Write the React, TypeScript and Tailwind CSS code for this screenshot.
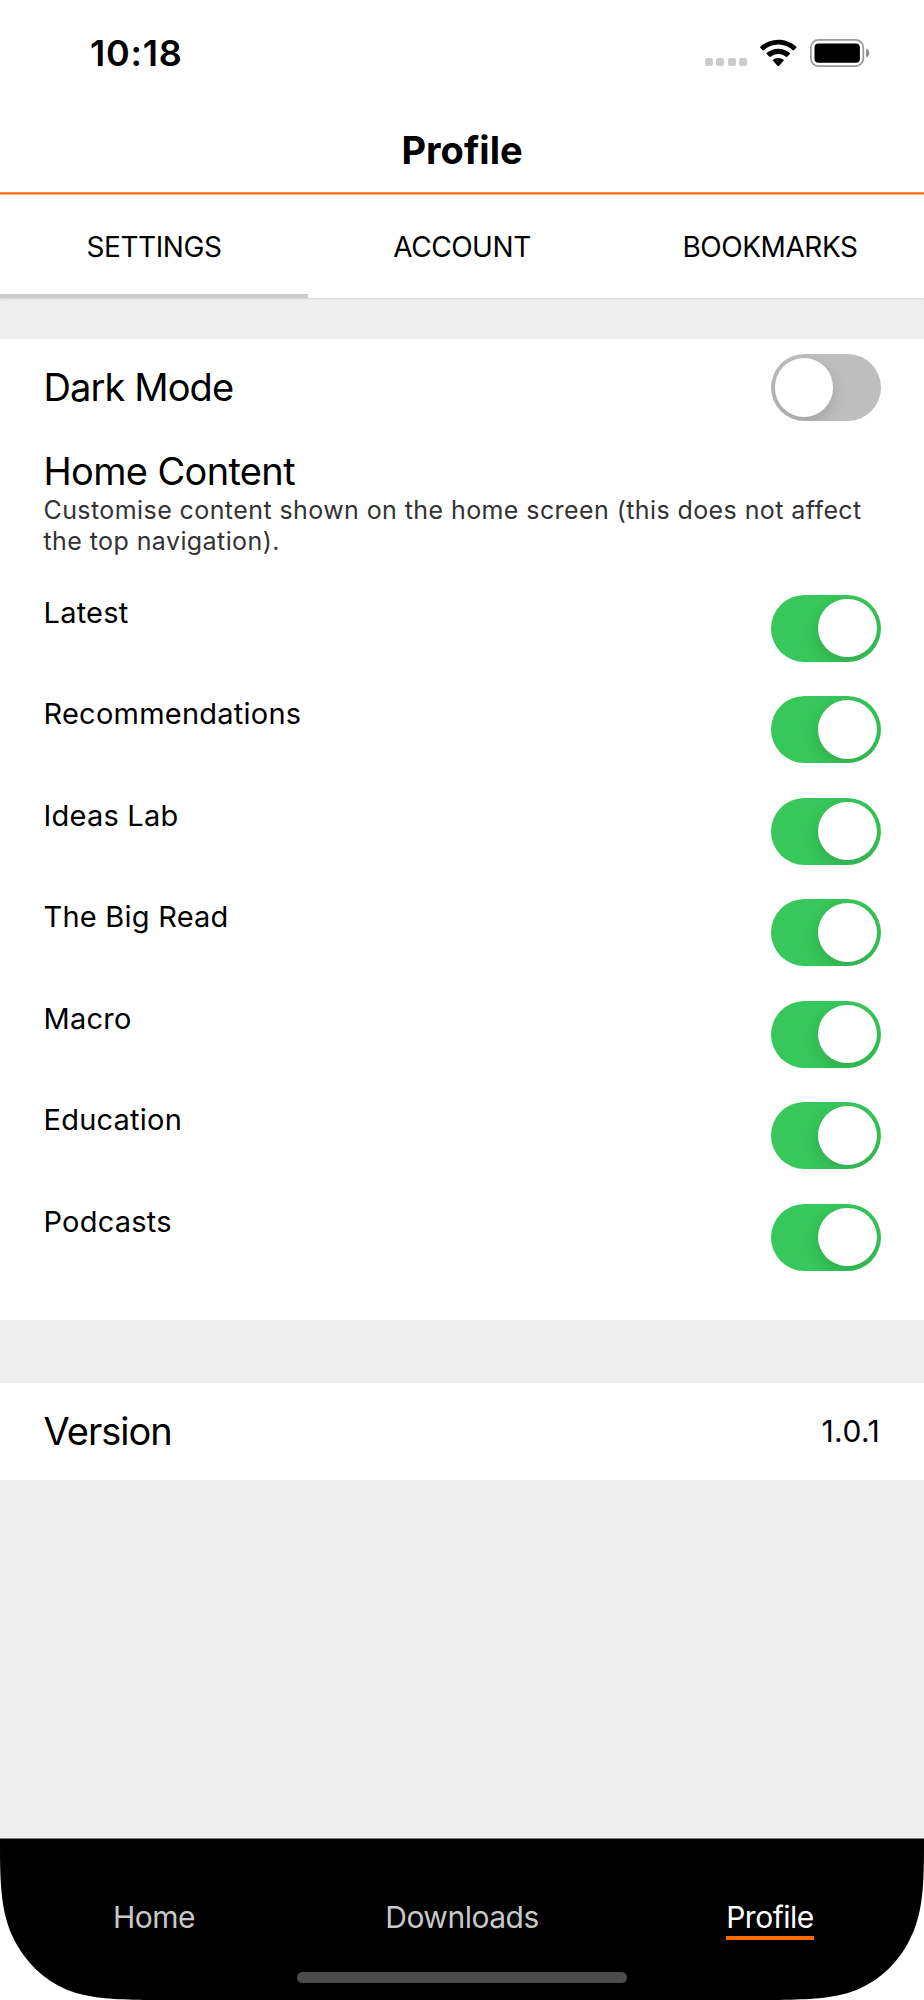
import clsx from "clsx";

interface ToggleProps {
  on: boolean;
}

const tabs = ["SETTINGS", "ACCOUNT", "BOOKMARKS"];

const homeContent = [
  "Latest",
  "Recommendations",
  "Ideas Lab",
  "The Big Read",
  "Macro",
  "Education",
  "Podcasts",
];

const Toggle = ({ on }: ToggleProps) => (
  <button
    role="switch"
    aria-checked={on}
    className={clsx(
      "flex h-[67px] w-[110.2px] shrink-0 items-center overflow-hidden rounded-full px-1",
      on ? "justify-end bg-[#37c75a]" : "justify-start bg-[#bebebe]",
    )}
  >
    <span className="size-[58.6px] rounded-full bg-white shadow-[0_6px_16px_rgba(0,0,0,0.14)]" />
  </button>
);

const SignalDots = () => (
  <div className="mt-[19px] flex gap-[3.4px]">
    <span className="size-2 rounded-[2.5px] bg-[#cbcbcb]" />
    <span className="size-2 rounded-[2.5px] bg-[#cbcbcb]" />
    <span className="size-2 rounded-[2.5px] bg-[#cbcbcb]" />
    <span className="size-2 rounded-[2.5px] bg-[#cbcbcb]" />
  </div>
);

const WifiIcon = () => (
  <svg width="37" height="28" viewBox="0 0 37 28" className="ml-[13px]">
    <path d="M18.3 .7C25.3 .7 31.6 3.4 36.3 7.7Q36.8 8.2 36.3 8.8L33.9 11.2Q33.4 11.7 32.8 11.2C28.9 7.7 23.9 5.6 18.3 5.6C12.7 5.6 7.7 7.7 3.8 11.2Q3.2 11.7 2.7 11.2L.3 8.8Q-.2 8.2 .3 7.7C5 3.4 11.3 .7 18.3 .7Z" />
    <path d="M18.3 9.7C22.8 9.7 26.8 11.3 29.9 14Q30.4 14.5 29.9 15.1L27.2 17.8Q26.7 18.3 26.1 17.8C24 16 21.3 14.9 18.3 14.9C15.3 14.9 12.6 16 10.5 17.8Q9.9 18.3 9.4 17.8L6.7 15.1Q6.2 14.5 6.7 14C9.8 11.3 13.8 9.7 18.3 9.7Z" />
    <path d="M18.3 18.9C20.3 18.9 22.1 19.6 23.5 20.7Q24.1 21.2 23.6 21.8L18.9 26.9Q18.3 27.5 17.7 26.9L13 21.8Q12.5 21.2 13.1 20.7C14.5 19.6 16.3 18.9 18.3 18.9Z" />
  </svg>
);

const BatteryIcon = () => (
  <svg width="60" height="28" viewBox="0 0 60 28" className="ml-[13px]">
    <rect x=".9" y=".9" width="52.4" height="26.2" rx="7.6" fill="none" stroke="#999" strokeWidth="1.7" />
    <rect x="4.5" y="4.4" width="45.4" height="19.4" rx="4" />
    <path d="M56.2 9.6C58 10.3 59.2 12 59.2 14S58 17.7 56.2 18.4Z" fill="#888" />
  </svg>
);

const StatusBar = () => (
  <div className="flex h-[105px] items-center justify-between pr-[54px] pl-[90px]">
    <p className="text-[36px] leading-none font-semibold tracking-[0.8px]">10:18</p>
    <div className="flex items-center">
      <SignalDots />
      <WifiIcon />
      <BatteryIcon />
    </div>
  </div>
);

const Header = () => (
  <header>
    <div className="flex h-[87px] items-center justify-center pt-[3px]">
      <h1 className="text-[38px] leading-none font-bold">Profile</h1>
    </div>
    <div className="h-px bg-[#ff8a33]" />
    <div className="h-px bg-[#ee6616]" />
    <div className="h-px bg-[#ffc08e]" />
    <nav className="grid h-[103px] grid-cols-3 text-[28px] tracking-[-0.45px]">
      {tabs.map((tab, i) => (
        <button
          key={tab}
          className={clsx("border-b-4 pt-1", i === 0 ? "border-[#cbcbcb]" : "border-transparent")}
        >
          {tab}
        </button>
      ))}
    </nav>
  </header>
);

const TabBar = () => (
  <footer className="relative h-[162px] border-t border-[#777] bg-black">
    <nav className="grid grid-cols-3 pt-[60px] text-center text-[30px] leading-[37px] tracking-[-0.5px] text-[#c8c8c8]">
      <a>Home</a>
      <a>Downloads</a>
      <a className="mx-auto border-b-4 border-[#ff6d00] text-white">Profile</a>
    </nav>
    <div className="mx-auto mt-[32px] h-[11px] w-[330px] rounded-full bg-[#4c4c4c]" />
    {/* rounded screen corners */}
    <svg width="150" height="162" viewBox="0 0 150 162" className="absolute bottom-0 left-0 fill-white">
      <path d="M0 10C0 58 3 82 17 107C31 131 51 147 76 155C98 161 118 161.5 150 162H0Z" />
    </svg>
    <svg width="150" height="162" viewBox="0 0 150 162" className="absolute right-0 bottom-0 -scale-x-100 fill-white">
      <path d="M0 10C0 58 3 82 17 107C31 131 51 147 76 155C98 161 118 161.5 150 162H0Z" />
    </svg>
  </footer>
);

export default function App() {
  return (
    <div className="flex h-[2000px] w-[924px] flex-col overflow-hidden bg-[#eee] font-[Inter,sans-serif] text-black">
      <div className="bg-white shadow-[0_1px_2px_rgba(0,0,0,0.1)]">
        <StatusBar />
        <Header />
      </div>

      <section className="mt-[41px] h-[981px] bg-white pr-[43px] pl-[43.5px]">
        <div className="flex h-[97px] items-center justify-between">
          <h2 className="text-[38px] tracking-[-0.9px]">Dark Mode</h2>
          <Toggle on={false} />
        </div>

        <h2 className="mt-[11px] text-[38px] leading-[48px] tracking-[-0.65px]">Home Content</h2>
        <p className="text-[25px] leading-[31px] tracking-[0.415px] text-[#333]">
          Customise content shown on the home screen (this does not affect
          <br />
          the top navigation).
        </p>

        <ul className="mt-[37.7px]">
          {homeContent.map((item) => (
            <li key={item} className="flex h-[101.5px] items-start justify-between">
              <span className="text-[29px] leading-[36px] tracking-[0.23px]">{item}</span>
              <Toggle on />
            </li>
          ))}
        </ul>
      </section>

      <section className="mt-[63px] flex h-[97px] items-center justify-between bg-white pr-[44px] pl-[43.5px]">
        <h2 className="text-[38px] tracking-[-1px]">Version</h2>
        <p className="text-[30px] tracking-[0.4px]">1.0.1</p>
      </section>

      <div className="mt-auto">
        <TabBar />
      </div>
    </div>
  );
}
